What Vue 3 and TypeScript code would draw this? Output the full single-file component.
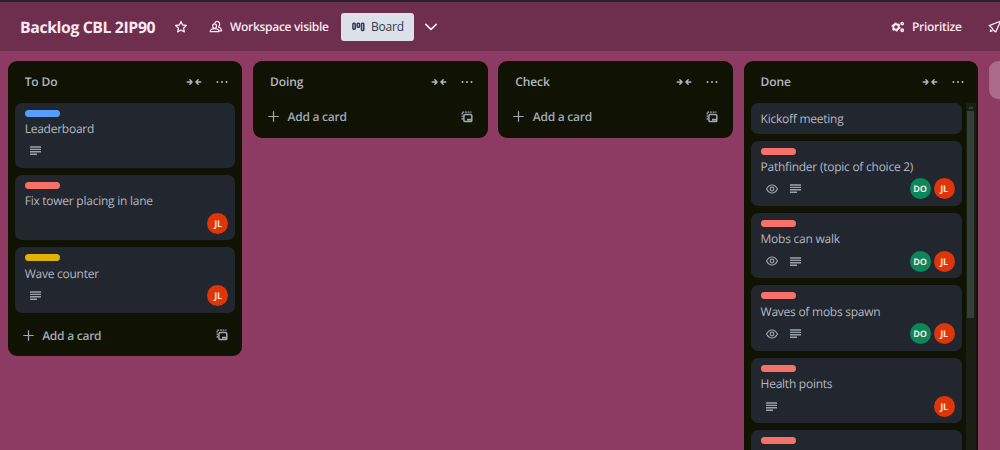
<script setup lang="ts">
interface Card {
  title: string
  label?: 'blue' | 'red' | 'yellow'
  watch?: boolean
  description?: boolean
  members?: string[]
}

interface List {
  name: string
  cards: Card[]
  scrolls?: boolean
}

const lists: List[] = [
  {
    name: 'To Do',
    cards: [
      { title: 'Leaderboard', label: 'blue', description: true },
      { title: 'Fix tower placing in lane', label: 'red', members: ['JL'] },
      { title: 'Wave counter', label: 'yellow', description: true, members: ['JL'] },
    ],
  },
  { name: 'Doing', cards: [] },
  { name: 'Check', cards: [] },
  {
    name: 'Done',
    scrolls: true,
    cards: [
      { title: 'Kickoff meeting' },
      { title: 'Pathfinder (topic of choice 2)', label: 'red', watch: true, description: true, members: ['DO', 'JL'] },
      { title: 'Mobs can walk', label: 'red', watch: true, description: true, members: ['DO', 'JL'] },
      { title: 'Waves of mobs spawn', label: 'red', watch: true, description: true, members: ['DO', 'JL'] },
      { title: 'Health points', label: 'red', description: true, members: ['JL'] },
      { title: '', label: 'red' },
    ],
  },
]
</script>

<template>
  <div class="app">
    <div class="topline"></div>
    <header class="bar">
      <h1>Backlog CBL 2IP90</h1>
      <svg class="star" viewBox="0 0 14 14" width="14" height="14">
        <path d="M7 1.500 8.600 5l3.800.450-2.800 2.600.750 3.800L7 10 3.650 11.850l.750-3.800-2.800-2.600L5.400 5Z" fill="none" stroke="currentColor" stroke-width="1.300" stroke-linejoin="round" />
      </svg>
      <div class="visibility">
        <svg viewBox="0 0 14 14" width="14" height="14" fill="none" stroke="currentColor" stroke-width="1.200" stroke-linejoin="round">
          <ellipse cx="5.600" cy="6.100" rx="1.900" ry="2.200" />
          <path d="M1.200 11.600c.2-2 1.700-2.900 4.400-2.900S9.700 9.600 9.900 11.600ZM5.700 3.500C6 1.900 7 1.300 8.200 1.400c1.700.1 2.600 1.500 2.400 3.200-.1 1-.6 1.900-1.200 2.400 1.900.5 3 1.700 3.200 3.800h-2.300" />
        </svg>
        <span>Workspace visible</span>
      </div>
      <button class="view">
        <svg viewBox="0 0 13 10" width="13" height="10" fill="none" stroke="currentColor" stroke-width="1.500">
          <rect x=".9" y="1.200" width="2.300" height="6" rx=".8" />
          <rect x="5.200" y="1.200" width="2.300" height="4" rx=".8" />
          <rect x="9.500" y="1.200" width="2.300" height="7.200" rx=".8" />
        </svg>
        <span>Board</span>
      </button>
      <svg class="chevron" viewBox="0 0 14 10" width="14" height="10">
        <path d="m1.800 2.300 5.200 5 5.200-5" fill="none" stroke="currentColor" stroke-width="1.600" stroke-linecap="round" stroke-linejoin="round" />
      </svg>
      <div class="prioritize">
        <svg viewBox="0 0 14 12" width="14" height="12" fill="none" stroke="currentColor">
          <circle cx="5" cy="6" r="2.700" stroke-width="1.900" />
          <circle cx="5" cy="6" r="4" stroke-width="1.200" stroke-dasharray="2.090 2.090" />
          <circle cx="11.200" cy="2.600" r="1.200" stroke-width="1.500" />
          <circle cx="11.200" cy="9.200" r="1.200" stroke-width="1.500" />
        </svg>
        <span>Prioritize</span>
      </div>
      <svg class="rocket" viewBox="0 0 14 14" width="14" height="14" fill="none" stroke="currentColor" stroke-width="1.300" stroke-linejoin="round">
        <path d="M12.500 1.200 1.200 5.600l2.600 2.100 1.500 2.500 2.500 1.700Z" />
        <path d="m2.800 9.300-.4 2 2-.5" />
      </svg>
    </header>

    <main class="board">
      <section v-for="list in lists" :key="list.name" class="list" :class="{ tall: list.scrolls }">
        <div class="list-head">
          <h2>{{ list.name }}</h2>
          <svg class="collapse" viewBox="0 0 16 8" width="16" height="8" fill="none" stroke="currentColor" stroke-width="1.400" stroke-linecap="round" stroke-linejoin="round">
            <path d="M1.200 4h4.600M3.800 1.700 6.100 4 3.800 6.300M14.800 4h-4.600M12.200 1.700 9.900 4l2.300 2.300" />
          </svg>
          <svg class="more" viewBox="0 0 12 4" width="12" height="4" fill="currentColor">
            <circle cx="1.500" cy="2" r="1" /><circle cx="6" cy="2" r="1" /><circle cx="10.500" cy="2" r="1" />
          </svg>
        </div>
        <div class="list-body">
          <div v-if="list.cards.length" class="cards">
            <article v-for="(card, i) in list.cards" :key="i" class="card" :class="{ plain: !card.label }">
              <div v-if="card.label" class="label" :class="card.label"></div>
              <div class="title">{{ card.title }}</div>
              <div v-if="card.label" class="meta">
                <svg v-if="card.watch" class="eye" viewBox="0 0 12 10" width="12" height="10" fill="none" stroke="currentColor" stroke-width="1.200">
                  <path d="M.6 5C2 2.300 3.800 1 6 1s4 1.300 5.400 4C10 7.700 8.200 9 6 9S2 7.700.6 5Z" />
                  <circle cx="6" cy="5" r="1.800" />
                </svg>
                <svg v-if="card.description" class="desc" viewBox="0 0 11 9" width="11" height="9" stroke="currentColor" stroke-width="1.400">
                  <path d="M0 1h11M0 3.400h11M0 5.800h11M0 8.200h7" />
                </svg>
                <div class="members">
                  <span v-for="m in card.members" :key="m" class="avatar" :class="m.toLowerCase()">{{ m }}</span>
                </div>
              </div>
            </article>
          </div>
          <div v-if="list.scrolls" class="track"><i class="arrow"></i><div class="thumb"></div></div>
        </div>
        <div v-if="!list.scrolls" class="add" :class="{ compact: !list.cards.length }">
          <svg viewBox="0 0 11 11" width="11" height="11" stroke="currentColor" stroke-width="1.200"><path d="M5.500.3v10.400M.3 5.500h10.400" /></svg>
          <span>Add a card</span>
          <svg class="template" viewBox="0 0 12 12" width="12" height="12" fill="none" stroke="currentColor">
            <path d="M1.200 8.800V1.200h9.300" stroke-width="1.200" stroke-dasharray="1.800 .8" />
            <rect x="2.900" y="3.600" width="7.900" height="7" rx="1.200" stroke-width="1.500" />
            <path d="M6 8.700H10" stroke-width="1.900" />
          </svg>
        </div>
      </section>
      <div class="add-list"></div>
    </main>
  </div>
</template>

<style>
body {
  margin: 0;
  overflow: hidden;
}
</style>

<style scoped>
.app {
  width: 1000px;
  height: 450px;
  overflow: hidden;
  display: flex;
  flex-direction: column;
  background: #8e3b64;
  font-family: 'Open Sans', 'Noto Sans', sans-serif;
  font-size: 12px;
  text-rendering: geometricPrecision;
}
svg {
  display: block;
  flex: none;
}
.topline {
  height: 2px;
  flex: none;
  background: #25202d;
}
.bar {
  height: 49px;
  flex: none;
  box-sizing: border-box;
  padding: 0 0 0 20px;
  display: flex;
  align-items: center;
  background: #6e2f4e;
  color: #fbe8f2;
  font-weight: 650;
  white-space: nowrap;
}
h1 {
  margin: 0;
  width: 154px;
  flex: none;
  font-size: 15.800px;
  font-weight: 700;
  letter-spacing: -0.380px;
}
.visibility {
  display: flex;
  align-items: center;
  width: 119px;
  flex: none;
  margin-left: 21px;
  gap: 7px;
  letter-spacing: -0.300px;
}
.view {
  width: 73px;
  flex: none;
  height: 28px;
  margin-left: 13px;
  padding: 0 0 0 11px;
  display: flex;
  align-items: center;
  gap: 6px;
  border: 0;
  border-radius: 3px;
  background: #dce0eb;
  color: #303b50;
  font: 500 12px 'Open Sans', 'Noto Sans', sans-serif;
  letter-spacing: -0.200px;
}
.star {
  margin-left: 0;
}
.chevron {
  margin-left: 10px;
}
.prioritize {
  margin-left: 453px;
  width: 71px;
  flex: none;
  display: flex;
  align-items: center;
  gap: 7px;
  letter-spacing: -0.300px;
}
.rocket {
  margin-left: 26px;
}
.board {
  flex: 1;
  min-height: 0;
  display: flex;
  align-items: flex-start;
  gap: 10.500px;
  padding: 10.400px 0 0 7.700px;
}
.list {
  width: 234.800px;
  flex: none;
  border-radius: 9px;
  background: #101204;
  color: #b2b8c1;
}
.list.tall {
  height: 410px;
}
.list-head {
  height: 41.200px;
  box-sizing: border-box;
  padding: 0 14.700px 0 17px;
  display: flex;
  align-items: center;
}
h2 {
  flex: 1;
  margin: 0;
  font-size: 12px;
  font-weight: 650;
  letter-spacing: -0.100px;
}
.more {
  margin-left: 14px;
}
.list-body {
  display: flex;
}
.cards {
  flex: 1;
  display: flex;
  flex-direction: column;
  gap: 7px;
  padding: 0 7px;
}
.tall .cards {
  padding-right: 4px;
}
.card {
  height: 65.450px;
  flex: none;
  box-sizing: border-box;
  padding: 7px 7px 0 10px;
  border-radius: 7px;
  background: #22262e;
}
.card.plain {
  height: 31px;
}
.label {
  width: 35px;
  height: 7px;
  border-radius: 4px;
}
.blue {
  background: #579dff;
}
.red {
  background: #f87168;
}
.yellow {
  background: #e2b203;
}
.title {
  height: 17px;
  line-height: 17px;
  white-space: nowrap;
  font-weight: 450;
  letter-spacing: -0.250px;
}
.label + .title {
  margin-top: 3.400px;
}
.meta {
  height: 21px;
  margin-top: 3.300px;
  padding-left: 5px;
  display: flex;
  align-items: center;
  color: #9aa2ad;
}
.eye {
  margin-right: 12.500px;
}
.members {
  margin-left: auto;
  display: flex;
  gap: 3px;
}
.avatar {
  width: 21px;
  height: 21px;
  border-radius: 50%;
  text-align: center;
  font-size: 9px;
  font-weight: 700;
  line-height: 21px;
  color: #fbe4dc;
}
.jl {
  background: #de350b;
  letter-spacing: -0.200px;
}
.do {
  background: #0b875b;
}
.track {
  width: 10px;
  height: 369px;
  margin-right: 2.800px;
  background: #1a1e14;
}
.arrow {
  display: block;
  width: 4px;
  height: 2px;
  margin: 4px 3px 2px;
  background: #3c4138;
}
.thumb {
  width: 7px;
  height: 207px;
  margin-left: 1.500px;
  background: #343f38;
}
.add {
  height: 35px;
  padding: 5px 14.700px 3px 15px;
  display: flex;
  align-items: center;
  gap: 8.500px;
  font-weight: 650;
  letter-spacing: -0.250px;
  color: #a2a9b4;
}
.add.compact {
  height: 28px;
  padding-top: 0;
  padding-bottom: 7px;
}
.template {
  margin-left: auto;
}
.add-list {
  width: 60px;
  height: 38px;
  flex: none;
  border-radius: 9px;
  background: #ac6a8b;
}
</style>
